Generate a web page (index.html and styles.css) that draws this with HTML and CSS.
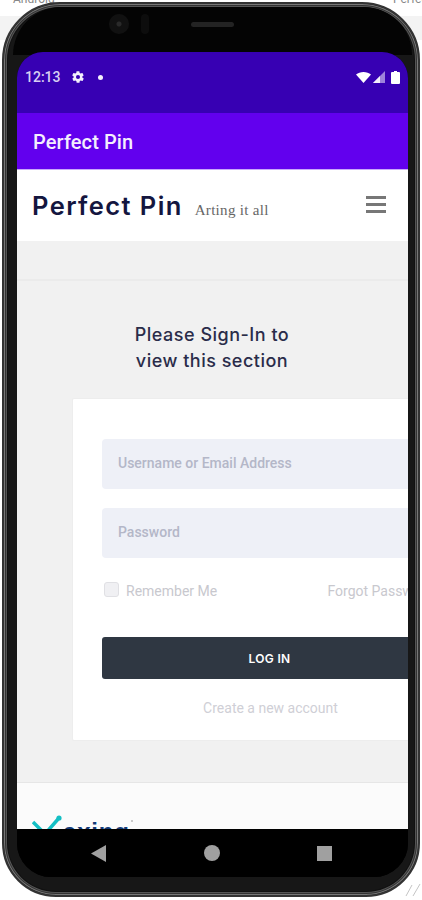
FILE: index.html
```html
<!DOCTYPE html>
<html lang="en">
<head>
<meta charset="utf-8">
<title>Perfect Pin</title>
<link rel="stylesheet" href="styles.css">
</head>
<body>
<span class="bg-text bg-left">Android</span>
<span class="bg-text bg-right">Perfect</span>
<div class="bg-strip bg-strip-left"></div>
<div class="bg-strip bg-strip-right"></div>
<div class="phone">
  <div class="bezel-top">
    <span class="camera"></span>
    <span class="sensor"></span>
    <span class="speaker"></span>
  </div>
  <div class="screen">
    <div class="status">
      <span class="time">12:13</span>
      <svg class="gear" viewBox="0 0 24 24"><path d="M19.4 13a7.5 7.5 0 0 0 0-2l2.1-1.6c.2-.2.2-.4.1-.6l-2-3.5c-.1-.2-.4-.3-.6-.2l-2.5 1a7.3 7.3 0 0 0-1.7-1l-.4-2.7c0-.2-.2-.4-.5-.4h-4c-.3 0-.5.2-.5.4l-.4 2.7a7.3 7.3 0 0 0-1.7 1l-2.5-1c-.2-.1-.5 0-.6.2l-2 3.5c-.1.2-.1.4.1.6L4.6 11a7.5 7.5 0 0 0 0 2l-2.100 1.600c-.2.2-.2.4-.1.6l2 3.500c.1.2.4.3.6.2l2.500-1c.5.4 1.100.7 1.700 1l.4 2.700c0 .2.2.4.5.4h4c.3 0 .5-.2.5-.4l.4-2.700c.6-.3 1.200-.6 1.700-1l2.500 1c.2.1.5 0 .6-.2l2-3.500c.1-.2.1-.4-.1-.6L19.400 13zM12 15.500a3.500 3.500 0 1 1 0-7 3.500 3.500 0 0 1 0 7z"/></svg>
      <span class="dot"></span>
      <span class="spacer"></span>
      <svg class="wifi" viewBox="0 0 15 11"><path d="M0 2.500C2 .9 4.600 0 7.500 0s5.500.9 7.500 2.500L7.500 11z"/></svg>
      <svg class="signal" viewBox="0 0 12 12"><path class="signal-dim" d="M12 0v12H0z"/><path d="M7 5v7H0z"/></svg>
      <svg class="battery" viewBox="0 0 9 13"><path d="M3 0h3v1h2a1 1 0 0 1 1 1v10a1 1 0 0 1-1 1H1a1 1 0 0 1-1-1V2a1 1 0 0 1 1-1h2z"/></svg>
    </div>
    <div class="appbar">Perfect Pin</div>
    <div class="webview">
      <header class="site-header">
        <span class="brand">Perfect Pin</span>
        <span class="tagline">Arting it all</span>
        <span class="spacer"></span>
        <span class="burger"><i></i><i></i><i></i></span>
      </header>
      <div class="band"></div>
      <main class="content">
        <h2 class="notice">Please Sign-In to<br>view this section</h2>
        <form class="card">
          <div class="field">Username or Email Address</div>
          <div class="field">Password</div>
          <div class="options">
            <label class="remember"><span class="check"></span>Remember Me</label>
            <span class="forgot">Forgot Password?</span>
          </div>
          <div class="login">LOG IN</div>
          <div class="create">Create a new account</div>
        </form>
      </main>
      <footer class="footer">
        <svg class="logo-mark" viewBox="0 0 30 22"><path d="M1 9l12 12L27 5"/><circle cx="27" cy="5" r="2.600"/></svg>
        <span class="logo-text">axing</span>
        <span class="logo-reg"></span>
      </footer>
    </div>
    <nav class="nav">
      <svg class="back" viewBox="0 0 15 17"><path d="M15 0v17L0 8.500z"/></svg>
      <span class="home"></span>
      <span class="recent"></span>
    </nav>
  </div>
</div>
<svg class="bg-marks" viewBox="0 0 16 16"><path d="M1 15L7 4M8 15L15 3"/></svg>
</body>
</html>
```
FILE: styles.css
```css
* { box-sizing: border-box; }
html, body { margin: 0; padding: 0; }
body {
  position: relative;
  width: 422px;
  height: 900px;
  overflow: hidden;
  background: #fff;
  font-family: Roboto, "Liberation Sans", sans-serif;
}
.bg-text {
  position: absolute;
  top: -8px;
  font-size: 12px;
  color: #888;
}
.bg-left { left: 13px; }
.bg-right { left: 393px; }
.bg-strip {
  position: absolute;
  top: 16px;
  width: 60px;
  height: 24px;
  background: #f3f3f3;
}
.bg-strip-left { left: 0; }
.bg-strip-right { right: 0; }
.bg-marks {
  position: absolute;
  left: 405px;
  top: 881px;
  width: 16px;
  height: 16px;
  fill: none;
  stroke: #c4c4c4;
}
.phone {
  position: relative;
  display: flex;
  flex-direction: column;
  width: 418px;
  height: 895px;
  margin: 2px;
  padding: 0 10px 18px 13px;
  background: #171717;
  border: 2px solid #333;
  border-radius: 58px 58px 54px 54px;
  box-shadow: inset 0 0 0 1px #777, inset 0 0 0 2px #333, inset 0 0 0 3px #555, inset 0 0 0 4px #111;
  filter: blur(.6px);
}
.bezel-top {
  display: flex;
  align-items: center;
  flex: none;
  height: 48px;
  margin: 3px -4px 0;
  padding: 0 0 14px 96px;
  background: #040404;
  border-radius: 50px 50px 0 0;
}
.camera {
  width: 20px;
  height: 20px;
  background: radial-gradient(circle, #2a2a2a 0 2px, #111 3px);
  border-radius: 50%;
}
.sensor {
  width: 8px;
  height: 20px;
  margin-left: 12px;
  background: #0d0d0d;
  border-radius: 4px;
}
.speaker {
  width: 43px;
  height: 5px;
  margin-left: 42px;
  background: #232323;
  border-radius: 3px;
}
.screen {
  display: flex;
  flex: 1;
  flex-direction: column;
  min-height: 0;
  overflow: hidden;
  background: #000;
  border-radius: 26px 26px 34px 34px;
  margin-top: -3px;
}
.status {
  display: flex;
  align-items: center;
  flex: none;
  height: 61px;
  padding: 0 8px 11px 8px;
  color: #e2dcf5;
  background: #3700b3;
}
.time {
  font-size: 14px;
  font-weight: 500;
  color: #d9d0f2;
}
.gear {
  width: 14px;
  height: 14px;
  margin-left: 10px;
  fill: #f4f0fc;
}
.dot {
  width: 5px;
  height: 5px;
  margin-left: 13px;
  background: #f4f0fc;
  border-radius: 50%;
}
.spacer { flex: 1; }
.wifi { width: 15px; height: 11px; fill: #fff; }
.signal { width: 12px; height: 12px; margin-left: 2px; fill: #f2eefb; }
.signal-dim { opacity: .55; }
.battery { width: 9px; height: 13px; margin-left: 6px; fill: #fff; }
.appbar {
  display: flex;
  align-items: center;
  flex: none;
  height: 57px;
  padding: 2px 0 0 16px;
  font-size: 20px;
  font-weight: 500;
  letter-spacing: .1px;
  color: #f4eefe;
  background: #6200ee;
  border-bottom: 1px solid #c9a8fb;
}
.webview {
  display: flex;
  flex: none;
  flex-direction: column;
  height: 659px;
  overflow: hidden;
  background: #f1f1f1;
}
.site-header {
  display: flex;
  align-items: center;
  flex: none;
  height: 71px;
  padding: 0 22px 0 15px;
  background: #fff;
}
.brand {
  font-family: Inter, sans-serif;
  font-size: 25.500px;
  font-weight: 600;
  letter-spacing: 1.400px;
  color: #14163f;
}
.tagline {
  margin: 9px 0 0 12px;
  font-family: "Liberation Serif", serif;
  font-size: 15px;
  letter-spacing: .3px;
  color: #666;
}
.burger {
  display: flex;
  flex-direction: column;
  gap: 4.500px;
  width: 20px;
  margin-top: -2px;
}
.burger i {
  display: block;
  height: 2.500px;
  background: #777;
}
.band {
  flex: none;
  height: 40px;
  background: #f1f1f1;
  border-bottom: 2px solid #ebebeb;
}
.content {
  flex: none;
  height: 502px;
  padding-top: 41px;
  background: #f1f1f1;
  border-bottom: 1px solid #e6e6e6;
}
.notice {
  width: 200px;
  margin: 0 0 24px 95px;
  font-family: Inter, sans-serif;
  font-size: 18px;
  font-weight: 500;
  letter-spacing: .5px;
  line-height: 26px;
  text-align: center;
  white-space: nowrap;
  color: #2a2c4a;
}
.card {
  display: block;
  width: 396px;
  height: 343px;
  margin-left: 55px;
  padding: 40px 30px 0 29px;
  background: #fff;
  border: 1px solid #ededed;
  border-radius: 2px;
}
.field {
  display: flex;
  align-items: center;
  height: 50px;
  margin-bottom: 19px;
  padding: 0 0 2px 16px;
  font-size: 14px;
  font-weight: 500;
  color: #b4b7c8;
  background: #eef0f7;
  border-radius: 4px;
}
.options {
  display: flex;
  align-items: center;
  justify-content: space-between;
  height: 20px;
  margin-top: 23px;
  font-size: 14px;
  color: #c8c8ce;
}
.remember {
  display: flex;
  align-items: center;
}
.forgot { margin-right: -3px; }
.check {
  width: 15px;
  height: 15px;
  margin: -3px 7px 0 2px;
  background: #f0f0f3;
  border: 1px solid #e0e0e4;
  border-radius: 3px;
}
.login {
  display: flex;
  align-items: center;
  justify-content: center;
  height: 42px;
  margin-top: 36px;
  font-family: Inter, sans-serif;
  font-size: 12px;
  font-weight: 600;
  letter-spacing: .3px;
  color: #fff;
  background: #2f3742;
  border-radius: 3px;
}
.create {
  margin-top: 21px;
  padding-left: 2px;
  font-size: 14px;
  text-align: center;
  color: #cfcfd6;
}
.footer {
  display: flex;
  align-items: flex-start;
  flex: none;
  height: 46px;
  padding: 30px 0 0 15px;
  overflow: hidden;
  background: #fbfbfb;
}
.logo-mark {
  flex: none;
  width: 30px;
  height: 22px;
  fill: #14bfc4;
}
.logo-mark path {
  fill: none;
  stroke: #14bfc4;
  stroke-width: 3.500;
}
.logo-text {
  margin: 8px 0 0 1px;
  font-family: "Liberation Sans", sans-serif;
  font-size: 24px;
  font-weight: 700;
  letter-spacing: .8px;
  line-height: 22px;
  color: #123a78;
}
.logo-reg {
  width: 2px;
  height: 2px;
  margin: 7px 0 0 1px;
  background: #bbb;
  border-radius: 50%;
}
.nav {
  display: flex;
  align-items: center;
  flex: 1;
  min-height: 0;
  padding: 0 0 0 74px;
  background: #000;
}
.back { width: 15px; height: 17px; fill: #a0a0a0; }
.home {
  width: 16px;
  height: 16px;
  margin-left: 98px;
  background: #a0a0a0;
  border-radius: 50%;
}
.recent {
  width: 15px;
  height: 15px;
  margin-left: 97px;
  background: #a0a0a0;
}
```
